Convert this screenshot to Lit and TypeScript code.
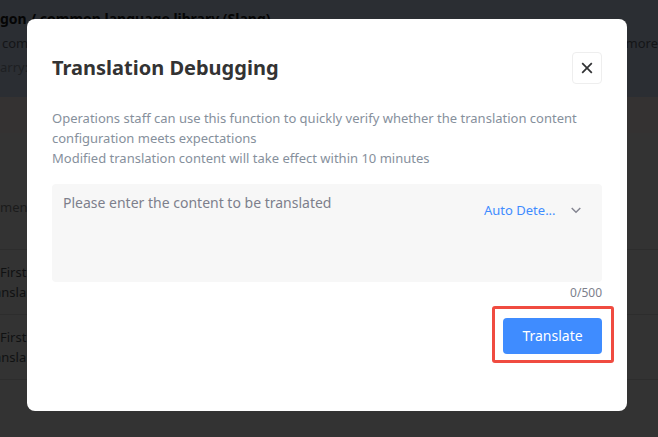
import { LitElement, html, css } from "lit";
import { customElement, state } from "lit/decorators.js";

@customElement("library-page")
class LibraryPage extends LitElement {
  static styles = css`
    :host {
      display: block;
      min-height: 100vh;
      overflow: hidden;
      white-space: nowrap;
      background: #333333;
      color: #101112;
      font-size: 13px;
      line-height: 20px;
    }
    .banner {
      height: 88px;
      padding-top: 9px;
      background: #2b2e33;
    }
    .heading {
      margin: 0;
      color: #050505;
      font-size: 14px;
      font-weight: 700;
      line-height: 20px;
    }
    .line {
      display: flex;
      justify-content: space-between;
      margin: 4px 0 0;
      padding-left: 2px;
      color: #141517;
    }
    .muted {
      padding-left: 0;
      color: #1d1f22;
    }
    .strip {
      height: 36px;
      background: #343232;
    }
    .records {
      width: calc(100% + 6px);
      margin-left: -6px;
      border-collapse: collapse;
    }
    .records th,
    .records td {
      padding: 12px 0;
      border-bottom: 1px solid #2d2d2d;
      text-align: left;
      font-weight: 400;
    }
    .records th {
      height: 84px;
      padding: 32px 6px 0;
      color: #1b1b1b;
      vertical-align: middle;
    }
    .first {
      display: block;
      padding-left: 6px;
    }
  `;

  render() {
    return html`
      <header class="banner">
        <h1 class="heading">gon / common language library (Slang)</h1>
        <p class="line"><span>com</span><span>more</span></p>
        <p class="line muted">arry:</p>
      </header>
      <div class="strip"></div>
      <table class="records">
        <thead>
          <tr><th scope="col">ment</th></tr>
        </thead>
        <tbody>
          ${[0, 1].map(
            () => html`<tr><td><span class="first">First</span>ansla</td></tr>`
          )}
        </tbody>
      </table>
    `;
  }
}

@customElement("translation-dialog")
class TranslationDialog extends LitElement {
  @state() private text = "";

  static styles = css`
    :host {
      display: block;
      box-sizing: border-box;
      padding: 32px 25px 57px;
      border-radius: 8px;
      background: #ffffff;
      font-size: 14px;
      line-height: 20px;
    }
    button,
    select,
    textarea {
      margin: 0;
      border: 0;
      font: inherit;
    }
    .top {
      display: flex;
      align-items: center;
      justify-content: space-between;
    }
    .title {
      margin: 0;
      color: #333333;
      font-size: 20px;
      line-height: 34px;
      font-weight: 700;
    }
    .close {
      display: grid;
      place-items: center;
      width: 30px;
      height: 32px;
      padding: 0;
      border: 1px solid #eeeeee;
      border-radius: 4px;
      background: #ffffff;
    }
    .hint {
      margin: 23px 0 0;
      color: #86909c;
      font-size: 13px;
    }
    .field {
      display: flex;
      align-items: flex-start;
      height: 98px;
      margin-top: 16px;
      border-radius: 4px;
      background: #f7f7f7;
    }
    .input {
      flex: 1;
      min-width: 0;
      height: 98px;
      box-sizing: border-box;
      padding: 9px 11px;
      resize: none;
      outline: none;
      background: transparent;
      color: #333333;
    }
    .input::placeholder {
      color: #7d7f8c;
      opacity: 1;
    }
    .language {
      display: flex;
      align-items: center;
      gap: 12px;
      padding: 16px 20px 0 0;
    }
    .select {
      width: 74px;
      padding: 0;
      appearance: none;
      outline: none;
      background: transparent;
      color: #3f8cff;
      font-size: 13px;
      line-height: 20px;
    }
    .count {
      margin: 0;
      color: #7d7f8c;
      font-size: 12px;
      line-height: 22px;
      text-align: right;
    }
    .actions {
      display: flex;
      justify-content: flex-end;
      margin-top: 14px;
    }
    .marked {
      position: relative;
    }
    .marked::after {
      content: "";
      position: absolute;
      inset: -12px -12px -9px -11px;
      border: 3px solid #f04b40;
      border-radius: 3px;
      pointer-events: none;
    }
    .submit {
      display: block;
      min-width: 99px;
      height: 36px;
      padding: 0 16px;
      border-radius: 4px;
      background: #3f8cff;
      color: #ffffff;
    }
  `;

  private onInput(e: Event) {
    this.text = (e.target as HTMLTextAreaElement).value;
  }

  render() {
    return html`
      <div class="top">
        <h2 class="title">Translation Debugging</h2>
        <button class="close" type="button" aria-label="Close">
          <svg width="12" height="12" viewBox="0 0 12 12" fill="none"
            stroke="#303133" stroke-width="1.7">
            <path d="M1.2 1.2 10.8 10.8M10.8 1.2 1.2 10.8" />
          </svg>
        </button>
      </div>
      <p class="hint">
        Operations staff can use this function to quickly verify whether the
        translation content configuration meets expectations<br />Modified
        translation content will take effect within 10 minutes
      </p>
      <div class="field">
        <textarea class="input" maxlength="500" aria-label="Content to translate"
          placeholder="Please enter the content to be translated"
          @input=${this.onInput}></textarea>
        <label class="language">
          <select class="select" aria-label="Source language">
            <option>Auto Dete...</option>
          </select>
          <svg width="12" height="12" viewBox="0 0 12 12" fill="none"
            stroke="#858692" stroke-width="1.5">
            <path d="M1.7 4 6 8.2 10.3 4" />
          </svg>
        </label>
      </div>
      <p class="count">${this.text.length}/500</p>
      <div class="actions">
        <div class="marked">
          <button class="submit" type="button">Translate</button>
        </div>
      </div>
    `;
  }
}

@customElement("app-root")
class AppRoot extends LitElement {
  static styles = css`
    :host {
      display: block;
      position: relative;
      min-height: 100vh;
      font-family: "Noto Sans", "Open Sans", sans-serif;
    }
    .overlay {
      position: absolute;
      inset: 0;
      padding: 19px 31px 26px 27px;
    }
  `;

  render() {
    return html`
      <library-page></library-page>
      <div class="overlay">
        <translation-dialog role="dialog" aria-label="Translation Debugging"></translation-dialog>
      </div>
    `;
  }
}
